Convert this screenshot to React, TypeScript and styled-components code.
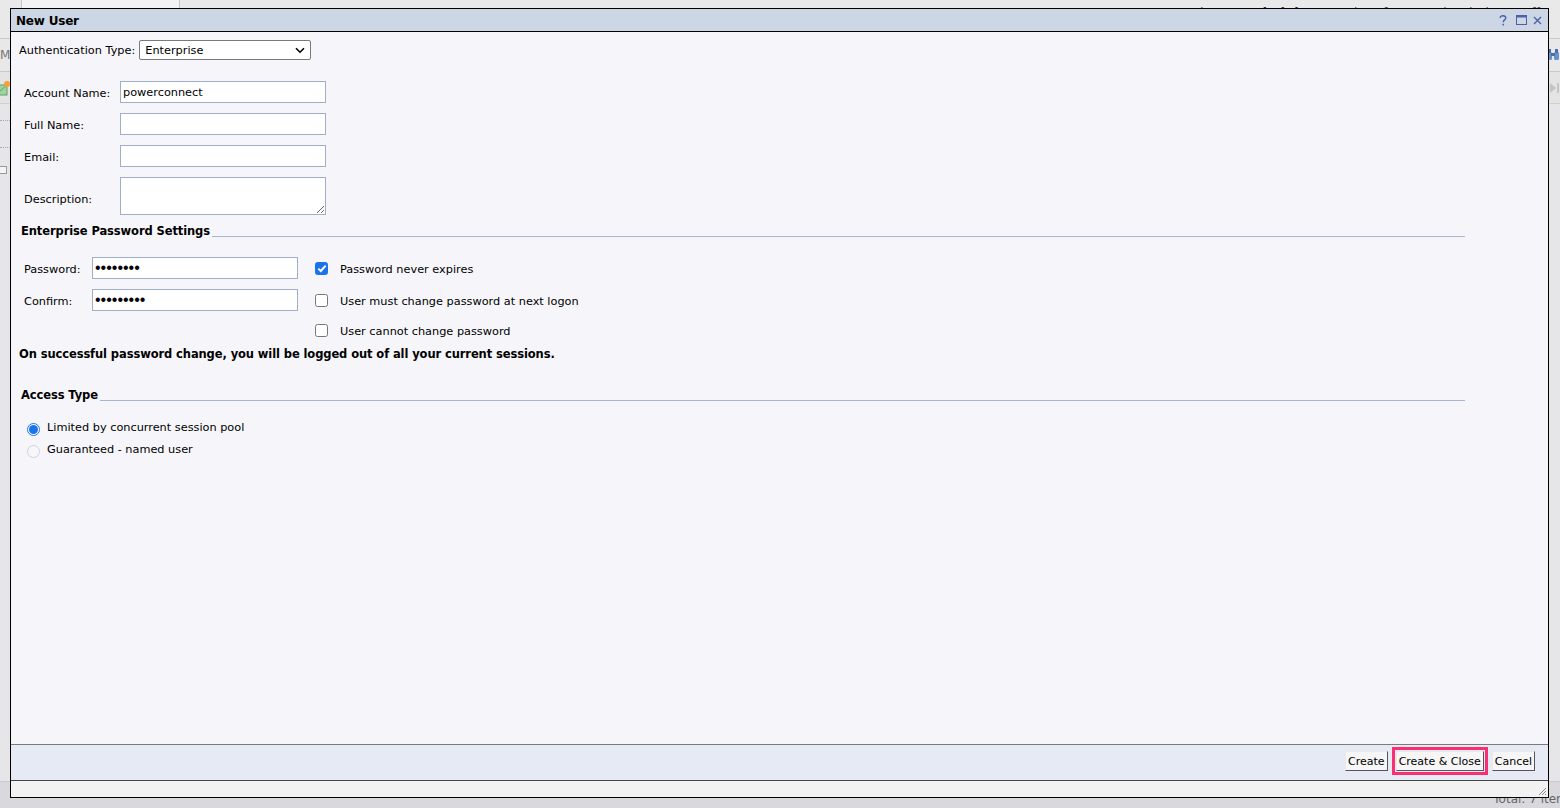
import React from "react";
import styled, { createGlobalStyle } from "styled-components";

const GlobalStyle = createGlobalStyle`
  html, body { margin: 0; padding: 0; }
  body {
    font-family: "DejaVu Sans", Verdana, sans-serif;
    font-size: 11px;
    color: #000;
    background: #d9d8dc;
  }
  * { box-sizing: border-box; }
`;

/* ---------- background application ---------- */

const Page = styled.div`
  position: relative;
  width: 1560px;
  height: 808px;
  overflow: hidden;
  display: flex;
  flex-direction: column;
  background: #e4e4e6;
`;

const AppHeader = styled.div`
  height: 38px;
  background: #e9e9e9;
  display: flex;
  align-items: flex-start;
  justify-content: space-between;
  padding-left: 21px;
  padding-right: 20px;
`;

const HeaderTab = styled.div`
  width: 159px;
  height: 12px;
  border: 1px solid #c6c6c6;
  border-top: none;
  background: #f3f3f3;
`;

const Welcome = styled.div`
  margin-top: 5px;
  font-size: 13px;
  color: #555;
  white-space: nowrap;
  b { color: #333; }
`;

const AppToolbar = styled.div`
  height: 34px;
  border-top: 1px solid #c9c9c9;
  border-bottom: 1px solid #c9c9c9;
  background: #e8e8e8;
  display: flex;
  align-items: center;
  justify-content: space-between;
  color: #777;
  font-size: 12px;
`;

const ToolbarText = styled.span`
  margin-left: 0;
`;

const AppSubbar = styled.div`
  height: 32px;
  border-bottom: 1px solid #cfcfcf;
  background: #e4e4e4;
  display: flex;
  align-items: center;
  justify-content: space-between;
`;

const AppContent = styled.div`
  flex: 1;
  background: #e6e6e8;
  display: flex;
  flex-direction: column;
  padding-top: 8px;
  gap: 18px;
`;

const TreeLine = styled.div`
  width: 12px;
  height: 9px;
  border-bottom: 1px dotted #aaa;
`;

const TreeBox = styled.div`
  width: 8px;
  height: 8px;
  margin-left: -1px;
  border: 1px solid #999;
  background: #f4f4f4;
`;

const AppFooter = styled.div`
  height: 27px;
  border-top: 1px solid #c9c9cf;
  background: #d9d8dc;
  display: flex;
  align-items: flex-end;
  justify-content: flex-end;
  padding-bottom: 2px;
  font-size: 12px;
  color: #666;
  white-space: nowrap;
  span { margin-right: -14px; }
`;

/* ---------- dialog ---------- */

const Dialog = styled.div`
  position: absolute;
  left: 10px;
  top: 8px;
  width: 1539px;
  height: 790px;
  border: 1px solid #000;
  background: #f6f6fa;
  display: flex;
  flex-direction: column;
`;

const TitleBar = styled.div`
  height: 23px;
  flex: none;
  background: #cdd6e4;
  border-bottom: 1px solid #000;
  display: flex;
  align-items: center;
  justify-content: space-between;
  padding: 0 6px 0 5px;
`;

const Title = styled.div`
  font-weight: bold;
  font-size: 12px;
  letter-spacing: -0.2px;
  margin-top: 1px;
`;

const TitleTools = styled.div`
  display: flex;
  align-items: center;
  gap: 6px;
  color: #4c60a6;
`;

const HelpIcon = styled.svg`
  margin-right: 3px;
`;

const Body = styled.div`
  flex: 1;
  padding: 8px 83px 0 8px;
  display: flex;
  flex-direction: column;
  align-items: stretch;
`;

const AuthRow = styled.div`
  display: flex;
  align-items: center;
  gap: 4px;
  height: 20px;
`;

const SelectWrap = styled.div`
  position: relative;
  width: 172px;
  height: 20px;
`;

const Select = styled.select`
  appearance: none;
  width: 100%;
  height: 100%;
  border: 1px solid #7a7a7a;
  border-radius: 2px;
  background: #fff;
  font: inherit;
  font-size: 11.3px;
  color: #000;
  padding: 1px 0 0 5px;
  outline: none;
`;

const Chevron = styled.svg`
  position: absolute;
  right: 6px;
  top: 7px;
  pointer-events: none;
`;

const FieldGrid = styled.div`
  margin-top: 21px;
  margin-left: 5px;
  display: grid;
  grid-template-columns: 96px 206px;
  row-gap: 10px;
  align-items: center;
`;

const FieldLabel = styled.label<{ $drop?: number }>`
  font-size: 11.3px;
  white-space: nowrap;
  padding-top: ${(p) => p.$drop ?? 2}px;
`;

const TextInput = styled.input`
  width: 206px;
  height: 22px;
  border: 1px solid #9eaecb;
  background: #fff;
  font: inherit;
  font-size: 11.3px;
  padding: 1px 2px 0;
  outline: none;
  color: #000;
`;

const PwInput = styled(TextInput)`
  font-family: "Liberation Sans", Arial, sans-serif;
  font-size: 16px;
  letter-spacing: 0;
  padding: 0 2px;
`;

const TextArea = styled.textarea`
  width: 206px;
  height: 38px;
  border: 1px solid #9eaecb;
  background: #fff;
  font: inherit;
  padding: 2px;
  outline: none;
  display: block;
`;

const SectionHeader = styled.div<{ $top: number }>`
  margin-top: ${(p) => p.$top}px;
  margin-left: 2px;
  display: flex;
  align-items: flex-end;
  height: 14px;
`;

const SectionTitle = styled.div`
  font-weight: bold;
  font-size: 11.5px;
  line-height: 14px;
  white-space: nowrap;
  letter-spacing: -0.1px;
`;

const SectionRule = styled.div`
  flex: 1;
  margin-left: 2px;
  margin-bottom: 1px;
  border-bottom: 1px solid #a7b6cf;
`;

const PwGrid = styled.div`
  margin-top: 19px;
  margin-left: 5px;
  display: grid;
  grid-template-columns: 68px 206px 42px auto;
  grid-template-rows: 22px 22px 18px;
  row-gap: 10px;
  align-items: center;
  justify-items: start;
`;

const CheckCell = styled.div`
  padding-left: 17px;
  display: flex;
  align-items: center;
`;

const CheckBox = styled.span<{ $checked?: boolean }>`
  width: 13px;
  height: 13px;
  border-radius: 2.5px;
  display: flex;
  align-items: center;
  justify-content: center;
  background: ${(p) => (p.$checked ? "#1a73e8" : "#fff")};
  border: 1px solid ${(p) => (p.$checked ? "#1a73e8" : "#767676")};
`;

const CheckLabel = styled.span`
  font-size: 11.3px;
  white-space: nowrap;
  padding-top: 2px;
`;

const Notice = styled.div`
  margin-top: 8px;
  font-weight: bold;
  font-size: 11.5px;
  line-height: 14px;
  letter-spacing: -0.1px;
`;

const RadioList = styled.div`
  margin-top: 16px;
  margin-left: 8px;
  display: flex;
  flex-direction: column;
  gap: 2px;
`;

const RadioRow = styled.div`
  height: 20px;
  display: flex;
  align-items: center;
  gap: 7px;
`;

const Radio = styled.span<{ $checked?: boolean }>`
  width: 13px;
  height: 13px;
  border-radius: 50%;
  flex: none;
  margin-top: 3px;
  display: flex;
  align-items: center;
  justify-content: center;
  border: 1px solid ${(p) => (p.$checked ? "#1a73e8" : "#d2d2d6")};
  background: ${(p) => (p.$checked ? "#fff" : "#f7f7f9")};
  &::after {
    content: "";
    display: ${(p) => (p.$checked ? "block" : "none")};
    width: 9px;
    height: 9px;
    border-radius: 50%;
    background: #1a73e8;
  }
`;

const RadioLabel = styled.span`
  font-size: 11.3px;
  white-space: nowrap;
  margin-top: -1px;
`;

const Footer = styled.div`
  flex: none;
  height: 37px;
  border-top: 1px solid #7c7c7c;
  border-bottom: 1px solid #444;
  background: #e6eaf4;
  display: flex;
  justify-content: flex-end;
  align-items: flex-start;
  gap: 8px;
  padding: 6px 13px 0 0;
`;

const Button = styled.button<{ $focused?: boolean }>`
  height: 20px;
  padding: 0 2px;
  font: inherit;
  font-size: 11px;
  color: #000;
  background: #f6f6f6;
  border: 1px solid;
  border-color: #e9e9e9 #555 #555 #e9e9e9;
  border-radius: 0;
  cursor: pointer;
  outline: ${(p) => (p.$focused ? "3px solid #fb2e73" : "none")};
  outline-offset: 1px;
`;

const StatusStrip = styled.div`
  flex: none;
  height: 16px;
  background: #f2f2f2;
  display: flex;
  justify-content: flex-end;
  align-items: flex-end;
`;

/* ---------- icons ---------- */

const Binoculars = () => (
  <svg width="14" height="12" viewBox="0 0 14 12">
    <rect x="1" y="3" width="5" height="8" rx="1.5" fill="#6c8fc8" />
    <rect x="8" y="3" width="5" height="8" rx="1.5" fill="#6c8fc8" />
    <rect x="2" y="0" width="3" height="4" fill="#4a6fae" />
    <rect x="9" y="0" width="3" height="4" fill="#4a6fae" />
    <rect x="5" y="4" width="4" height="3" fill="#4a6fae" />
  </svg>
);

const LastPage = () => (
  <svg width="12" height="12" viewBox="0 0 12 12">
    <path d="M2 1 L8 6 L2 11 Z" fill="#c4c4c4" />
    <rect x="9" y="1" width="2" height="10" fill="#c4c4c4" />
  </svg>
);

const MailIcon = () => (
  <svg width="18" height="16" viewBox="0 0 18 16" style={{ marginLeft: -8 }}>
    <rect x="1" y="5" width="14" height="10" fill="#9fd3a0" stroke="#5f9f62" />
    <path d="M1 5 L8 11 L15 5" fill="none" stroke="#5f9f62" />
    <circle cx="15" cy="4" r="3" fill="#f6a03a" />
  </svg>
);

const Check = () => (
  <svg width="10" height="9" viewBox="0 0 10 9">
    <path d="M1.3 4.6 L3.8 7 L8.7 1.6" fill="none" stroke="#fff" strokeWidth="2" />
  </svg>
);

const Grip = () => (
  <svg width="10" height="10" viewBox="0 0 10 10" style={{ marginRight: 1, marginBottom: 1 }}>
    <path d="M9 2 L2 9 M9 5 L5 9 M9 8 L8 9" stroke="#888" strokeWidth="1" />
  </svg>
);

export default function App() {
  return (
    <>
      <GlobalStyle />
      <Page>
        <AppHeader>
          <HeaderTab />
          <Welcome>
            Welcome, <b>Administrator</b> | Preferences | Help | Log Off
          </Welcome>
        </AppHeader>
        <AppToolbar>
          <ToolbarText>Manage</ToolbarText>
          <Binoculars />
        </AppToolbar>
        <AppSubbar>
          <MailIcon />
          <LastPage />
        </AppSubbar>
        <AppContent>
          <TreeLine />
          <TreeLine />
          <TreeBox />
        </AppContent>
        <AppFooter>
          <span>Total: 7 items</span>
        </AppFooter>

        <Dialog>
          <TitleBar>
            <Title>New User</Title>
            <TitleTools>
              <HelpIcon width="8" height="11" viewBox="0 0 8 11">
                <path d="M1.2 3 C1.2 1.3 2.4 0.7 4 0.7 C5.6 0.7 6.8 1.5 6.8 2.9 C6.8 4.9 4.2 4.9 4.2 7.2" fill="none" stroke="#4c60a6" strokeWidth="1.4" />
                <rect x="3.4" y="8.8" width="1.6" height="1.6" fill="#4c60a6" />
              </HelpIcon>
              <svg width="11" height="10" viewBox="0 0 11 10">
                <rect x="0.5" y="0.5" width="10" height="9" fill="none" stroke="#4c60a6" />
                <rect x="0.5" y="0.5" width="10" height="2" fill="#4c60a6" />
              </svg>
              <svg width="9" height="9" viewBox="0 0 9 9">
                <path d="M1 1 L8 8 M8 1 L1 8" stroke="#4c60a6" strokeWidth="1.4" />
              </svg>
            </TitleTools>
          </TitleBar>

          <Body>
            <AuthRow>
              <FieldLabel $drop={1}>Authentication Type:</FieldLabel>
              <SelectWrap>
                <Select defaultValue="Enterprise">
                  <option>Enterprise</option>
                  <option>Windows AD</option>
                  <option>LDAP</option>
                </Select>
                <Chevron width="10" height="7" viewBox="0 0 10 7">
                  <path d="M1 1.2 L5 5.2 L9 1.2" fill="none" stroke="#000" strokeWidth="1.6" />
                </Chevron>
              </SelectWrap>
            </AuthRow>

            <FieldGrid>
              <FieldLabel>Account Name:</FieldLabel>
              <TextInput defaultValue="powerconnect" />
              <FieldLabel>Full Name:</FieldLabel>
              <TextInput />
              <FieldLabel>Email:</FieldLabel>
              <TextInput />
              <FieldLabel $drop={6}>Description:</FieldLabel>
              <TextArea />
            </FieldGrid>

            <SectionHeader $top={9}>
              <SectionTitle>Enterprise Password Settings</SectionTitle>
              <SectionRule />
            </SectionHeader>

            <PwGrid>
              <FieldLabel>Password:</FieldLabel>
              <PwInput type="password" defaultValue="12345678" />
              <CheckCell>
                <CheckBox $checked>
                  <Check />
                </CheckBox>
              </CheckCell>
              <CheckLabel>Password never expires</CheckLabel>

              <FieldLabel>Confirm:</FieldLabel>
              <PwInput type="password" defaultValue="123456789" />
              <CheckCell>
                <CheckBox />
              </CheckCell>
              <CheckLabel>User must change password at next logon</CheckLabel>

              <span />
              <span />
              <CheckCell>
                <CheckBox />
              </CheckCell>
              <CheckLabel>User cannot change password</CheckLabel>
            </PwGrid>

            <Notice>On successful password change, you will be logged out of all your current sessions.</Notice>

            <SectionHeader $top={27}>
              <SectionTitle>Access Type</SectionTitle>
              <SectionRule />
            </SectionHeader>

            <RadioList>
              <RadioRow>
                <Radio $checked />
                <RadioLabel>Limited by concurrent session pool</RadioLabel>
              </RadioRow>
              <RadioRow>
                <Radio />
                <RadioLabel>Guaranteed - named user</RadioLabel>
              </RadioRow>
            </RadioList>
          </Body>

          <Footer>
            <Button>Create</Button>
            <Button $focused>Create &amp; Close</Button>
            <Button>Cancel</Button>
          </Footer>
          <StatusStrip>
            <Grip />
          </StatusStrip>
        </Dialog>
      </Page>
    </>
  );
}
